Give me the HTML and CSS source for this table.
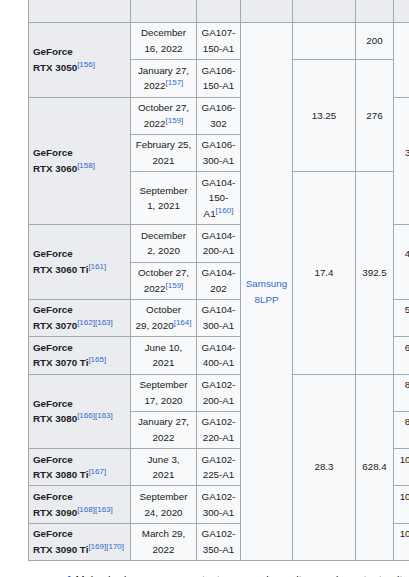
FILE: index.html
```html
<!DOCTYPE html>
<html>
<head>
<meta charset="utf-8">
<link rel="stylesheet" href="styles.css">
</head>
<body>
<div class="page">
  <div class="tablewrap">
    <table class="specs">
      <colgroup>
        <col class="w-model"><col class="w-launch"><col class="w-code"><col class="w-proc"><col class="w-trans"><col class="w-die"><col class="w-core">
      </colgroup>
      <tr class="head"><th></th><th></th><th></th><th></th><th></th><th></th><th></th></tr>
      <tr>
        <th rowspan="2" class="model">GeForce<br>RTX 3050<sup>[156]</sup></th>
        <td>December<br>16, 2022</td>
        <td>GA107-<br>150-A1</td>
        <td rowspan="14"><a class="link">Samsung<br>8LPP</a></td>
        <td></td>
        <td>200</td>
        <td rowspan="2" class="core">2560<br>:20:80</td>
      </tr>
      <tr>
        <td>January 27,<br>2022<sup>[157]</sup></td>
        <td>GA106-<br>150-A1</td>
        <td rowspan="3">13.25</td>
        <td rowspan="3">276</td>
      </tr>
      <tr>
        <th rowspan="3" class="model">GeForce<br>RTX 3060<sup>[158]</sup></th>
        <td>October 27,<br>2022<sup>[159]</sup></td>
        <td>GA106-<br>302</td>
        <td rowspan="3" class="core">3584:112:48<br>:28:112</td>
      </tr>
      <tr>
        <td>February 25,<br>2021</td>
        <td>GA106-<br>300-A1</td>
      </tr>
      <tr>
        <td>September<br>1, 2021</td>
        <td>GA104-<br>150-<br>A1<sup>[160]</sup></td>
        <td rowspan="5">17.4</td>
        <td rowspan="5">392.5</td>
      </tr>
      <tr>
        <th rowspan="2" class="model">GeForce<br>RTX 3060 Ti<sup>[161]</sup></th>
        <td>December<br>2, 2020</td>
        <td>GA104-<br>200-A1</td>
        <td rowspan="2" class="core">4864:152:80<br>:38:152</td>
      </tr>
      <tr>
        <td>October 27,<br>2022<sup>[159]</sup></td>
        <td>GA104-<br>202</td>
      </tr>
      <tr>
        <th class="model">GeForce<br>RTX 3070<sup>[162][163]</sup></th>
        <td>October<br>29, 2020<sup>[164]</sup></td>
        <td>GA104-<br>300-A1</td>
        <td class="core">5888:184:96<br>:46:184</td>
      </tr>
      <tr>
        <th class="model">GeForce<br>RTX 3070 Ti<sup>[165]</sup></th>
        <td>June 10,<br>2021</td>
        <td>GA104-<br>400-A1</td>
        <td class="core">6144:192:96<br>:48:192</td>
      </tr>
      <tr>
        <th rowspan="2" class="model">GeForce<br>RTX 3080<sup>[166][163]</sup></th>
        <td>September<br>17, 2020</td>
        <td>GA102-<br>200-A1</td>
        <td rowspan="5">28.3</td>
        <td rowspan="5">628.4</td>
        <td class="core">8704:272:96<br>:68:272</td>
      </tr>
      <tr>
        <td>January 27,<br>2022</td>
        <td>GA102-<br>220-A1</td>
        <td class="core">8960:280:96<br>:70:280</td>
      </tr>
      <tr>
        <th class="model">GeForce<br>RTX 3080 Ti<sup>[167]</sup></th>
        <td>June 3,<br>2021</td>
        <td>GA102-<br>225-A1</td>
        <td class="core">10240:320:112<br>:80:320</td>
      </tr>
      <tr>
        <th class="model">GeForce<br>RTX 3090<sup>[168][163]</sup></th>
        <td>September<br>24, 2020</td>
        <td>GA102-<br>300-A1</td>
        <td class="core">10496:328:112<br>:82:328</td>
      </tr>
      <tr>
        <th class="model">GeForce<br>RTX 3090 Ti<sup>[169][170]</sup></th>
        <td>March 29,<br>2022</td>
        <td>GA102-<br>350-A1</td>
        <td class="core">10752:336:112<br>:84:336</td>
      </tr>
    </table>
  </div>
  <ol class="notes">
    <li><span class="caret">^</span> Main shader processors : texture mapping units : render output units : ray tracing cores : tensor cores</li>
  </ol>
</div>
</body>
</html>
```

FILE: styles.css
```css
html, body {
  margin: 0;
  padding: 0;
  background: #ffffff;
  overflow: hidden;
}

.page {
  width: 409px;
  height: 577px;
  overflow: hidden;
  font-family: "Liberation Sans", Arial, sans-serif;
  color: #202122;
}

.tablewrap {
  padding-left: 28px;
}

.specs {
  border-collapse: collapse;
  table-layout: fixed;
  width: 442px;
  font-size: 9.8px;
  line-height: 1.606;
  background: #f8f9fa;
  color: #202122;
}

.w-model { width: 102px; }
.w-launch { width: 66px; }
.w-code { width: 44px; }
.w-proc { width: 52px; }
.w-trans { width: 63px; }
.w-die { width: 38px; }
.w-core { width: 77px; }

.specs td,
.specs th {
  border: 1px solid #a2a9b1;
  padding: 2.45px 4px;
  text-align: center;
  vertical-align: middle;
  white-space: nowrap;
  font-weight: normal;
}

.specs th {
  background: #eaecf0;
}

.specs th.model {
  text-align: left;
  font-weight: bold;
}

.specs .head th {
  border-top: 0;
  height: 22px;
  padding: 0;
}

.specs sup {
  font-size: 82%;
  line-height: 1;
  vertical-align: super;
  color: #3366cc;
  font-weight: normal;
}

.link {
  color: #3366cc;
  text-decoration: none;
}

.notes {
  margin: 11px 0 0 0;
  padding-left: 66px;
  list-style: none;
  font-size: 11px;
  line-height: 16px;
  white-space: nowrap;
}

.caret {
  color: #3366cc;
  font-weight: bold;
}
```
